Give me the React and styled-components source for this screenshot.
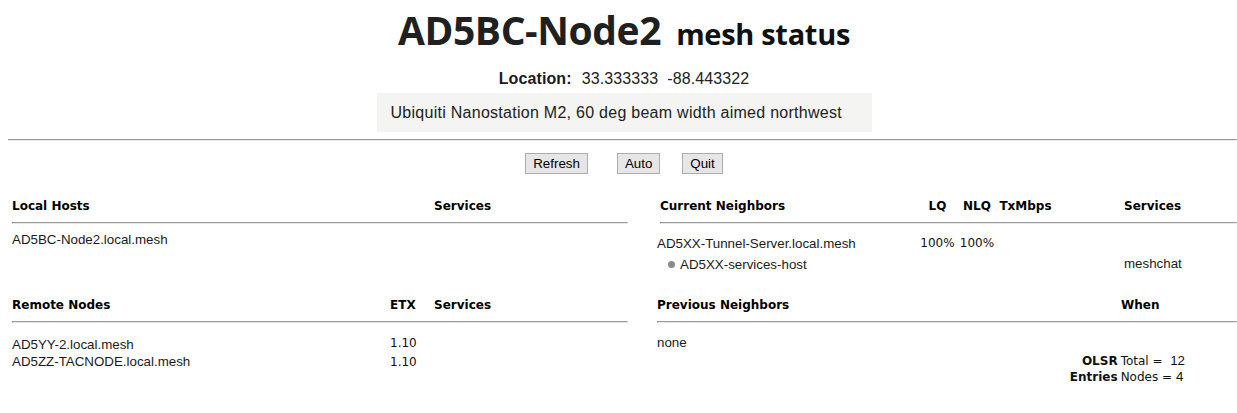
import React from "react";
import styled, { createGlobalStyle } from "styled-components";

const GlobalStyle = createGlobalStyle`
  body {
    margin: 8px 0 8px 8px;
    background: #fff;
    color: #1a1a1a;
    font-family: "Liberation Sans", Arial, sans-serif;
    font-size: 13.33px;
    overflow: hidden;
  }
`;

const Page = styled.div`
  width: 1229px;
`;

const Masthead = styled.div`
  padding-left: 3px;
`;

const Title = styled.h1`
  margin: 0;
  text-align: center;
  font-family: "Open Sans", "Liberation Sans", sans-serif;
  font-weight: 700;
  font-size: 39px;
  line-height: 44px;
  color: #202020;
  letter-spacing: -0.4px;
`;

const TitleSub = styled.span`
  margin-left: 15px;
  font-size: 29px;
  letter-spacing: -0.3px;
  color: #111;
`;

const Location = styled.div`
  margin-top: 13px;
  text-align: center;
  font-size: 16px;
  line-height: 20px;
  color: #222;
  letter-spacing: 0.1px;
`;

const LocLabel = styled.b`
  margin-right: 10px;
  color: #1a1a1a;
`;

const Description = styled.div`
  width: 495px;
  box-sizing: border-box;
  margin: 4px auto 0;
  padding: 10px 14px 9px;
  background: #f4f4f2;
  font-size: 16px;
  line-height: 20px;
  color: #222;
  letter-spacing: 0.27px;
`;

const Rule = styled.hr`
  height: 0;
  margin: 0;
  border-style: solid;
  border-width: 1px;
  border-color: #9a9a9a #e8e8e8 #e8e8e8 #9a9a9a;
`;

const TopRule = styled(Rule)`
  margin: 7px 0 0 -2px;
`;

const Buttons = styled.div`
  display: flex;
  justify-content: center;
  margin-top: 12px;
  padding-left: 3px;
`;

const Button = styled.button`
  margin-left: ${(p) => p.$gap || 0}px;
  height: 21px;
  padding: 0 7px;
  border: 1px solid #adadad;
  background: #e6e6e6;
  font-family: "Liberation Sans", Arial, sans-serif;
  font-size: 13.33px;
  color: #000;
`;

const Tables = styled.div`
  display: grid;
  grid-template-columns: 620px 1fr;
  grid-template-rows: 99px auto;
  column-gap: 28px;
  margin-top: 24px;
`;

const Section = styled.div`
  display: grid;
  grid-template-columns: ${(p) => p.$cols};
  align-content: start;
  padding-left: ${(p) => p.$pad || 0}px;
`;

const Head = styled.div`
  padding-left: ${(p) => p.$indent || 0}px;
  font-family: "DejaVu Sans", Verdana, sans-serif;
  font-weight: 700;
  font-size: 12px;
  line-height: 16px;
  color: #000;
  text-align: ${(p) => p.$align || "left"};
  grid-column: ${(p) => p.$span || "auto"};
  white-space: nowrap;
`;

const SectionRule = styled(Rule)`
  grid-column: 1 / -1;
  margin: 8px 0 0 ${(p) => p.$indent || 0}px;
`;

const Cell = styled.div`
  margin-top: ${(p) => p.$top || 0}px;
  font-size: 13.33px;
  line-height: ${(p) => p.$lh || 17}px;
  text-align: ${(p) => p.$align || "left"};
  grid-column: ${(p) => p.$span || "auto"};
  white-space: nowrap;
`;

const Num = styled(Cell)`
  font-family: "DejaVu Sans", Verdana, sans-serif;
  font-size: 12px;
  color: #111;
`;

const SubHost = styled(Cell)`
  display: flex;
  align-items: center;
  padding-left: 11px;
`;

const Dot = styled.span`
  width: 7px;
  height: 7px;
  margin-right: 5px;
  border-radius: 50%;
  background: #8a8a8a;
`;

const Olsr = styled.div`
  grid-column: 1 / -1;
  display: grid;
  grid-template-columns: auto auto;
  justify-content: end;
  column-gap: 3px;
  margin: 2px 52px 0 0;
  line-height: 16px;
`;

const OlsrLabel = styled.b`
  font-family: "DejaVu Sans", Verdana, sans-serif;
  font-size: 12px;
  text-align: right;
  color: #111;
`;

const OlsrValue = styled.span`
  font-family: "DejaVu Sans", Verdana, sans-serif;
  font-size: 12px;
  color: #111;
  white-space: pre;
`;

const OlsrNumber = styled.span`
  font-family: "Liberation Sans", Arial, sans-serif;
  font-size: 13.33px;
`;

const remoteNodes = [
  { name: "AD5YY-2.local.mesh", etx: "1.10" },
  { name: "AD5ZZ-TACNODE.local.mesh", etx: "1.10" },
];

export default function App() {
  return (
    <Page>
      <GlobalStyle />
      <Masthead>
        <Title>
          AD5BC-Node2<TitleSub>mesh status</TitleSub>
        </Title>
        <Location>
          <LocLabel>Location:</LocLabel>33.333333&nbsp;&nbsp;-88.443322
        </Location>
        <Description>Ubiquiti Nanostation M2, 60 deg beam width aimed northwest</Description>
      </Masthead>
      <TopRule />

      <Buttons>
        <Button>Refresh</Button>
        <Button $gap={29}>Auto</Button>
        <Button $gap={22}>Quit</Button>
      </Buttons>

      <Tables>
        <Section $cols="378px 44px 1fr" $pad={4}>
          <Head $span="1 / 3">Local Hosts</Head>
          <Head>Services</Head>
          <SectionRule />
          <Cell $top={7} $span="1 / -1">AD5BC-Node2.local.mesh</Cell>
        </Section>

        <Section $cols="261px 39px 40px 57px 70px 1fr" $pad={1}>
          <Head $indent={3}>Current Neighbors</Head>
          <Head $align="center">LQ</Head>
          <Head $align="center">NLQ</Head>
          <Head $align="center">TxMbps</Head>
          <Head />
          <Head>Services</Head>
          <SectionRule $indent={3} />
          <Cell $top={11}>AD5XX-Tunnel-Server.local.mesh</Cell>
          <Num $top={11} $align="center">100%</Num>
          <Num $top={11} $align="center">100%</Num>
          <Cell $top={11} $span="4 / -1" />
          <SubHost $top={4} $span="1 / 6">
            <Dot />
            AD5XX-services-host
          </SubHost>
          <Cell $top={3}>meshchat</Cell>
        </Section>

        <Section $cols="378px 44px 1fr" $pad={4}>
          <Head>Remote Nodes</Head>
          <Head>ETX</Head>
          <Head>Services</Head>
          <SectionRule />
          {remoteNodes.map((node, i) => (
            <React.Fragment key={node.name}>
              <Cell $top={i === 0 ? 13 : 0} $lh={17}>
                {node.name}
              </Cell>
              <Num $top={i === 0 ? 11 : 0} $lh={19}>
                {node.etx}
              </Num>
              <Cell />
            </React.Fragment>
          ))}
        </Section>

        <Section $cols="464px 1fr" $pad={1}>
          <Head>Previous Neighbors</Head>
          <Head>When</Head>
          <SectionRule />
          <Cell $top={11} $span="1 / -1">none</Cell>
          <Olsr>
            <OlsrLabel>OLSR</OlsrLabel>
            <OlsrValue>
              Total =  <OlsrNumber>12</OlsrNumber>
            </OlsrValue>
            <OlsrLabel>Entries</OlsrLabel>
            <OlsrValue>
              Nodes = <OlsrNumber>4</OlsrNumber>
            </OlsrValue>
          </Olsr>
        </Section>
      </Tables>
    </Page>
  );
}
